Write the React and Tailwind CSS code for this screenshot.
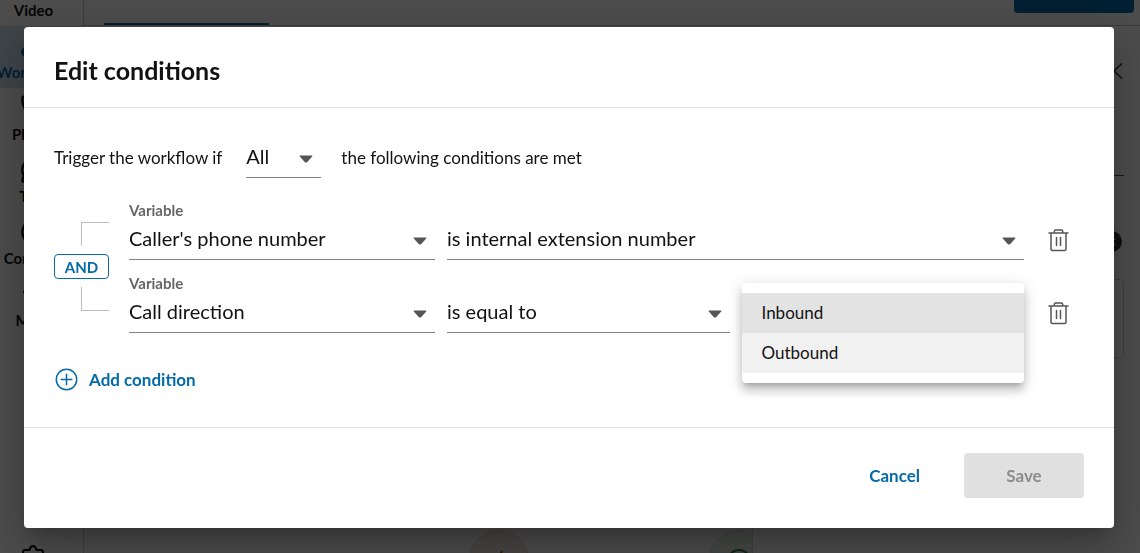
import { useState } from "react";
import { CircleUser, MessageCircle, Phone, X } from "lucide-react";

const navItems = [
  { label: "Video" },
  { label: "Workflows", icon: "flow", active: true },
  { label: "Phone", icon: Phone },
  { label: "Text", icon: MessageCircle },
  { label: "Contacts", icon: CircleUser },
  { label: "More", icon: "more" },
];

function NavIcon({ icon: Icon }) {
  if (!Icon) return <span className="h-7" />;
  if (Icon === "flow") {
    return (
      <svg className="h-7 w-7" viewBox="0 0 28 28" fill="currentColor" aria-hidden="true">
        <circle cx="6" cy="20" r="5" />
        <circle cx="22" cy="6" r="4" />
        <circle cx="22" cy="20" r="4" />
      </svg>
    );
  }
  if (Icon === "more") {
    return (
      <svg className="h-7 w-7" viewBox="0 0 28 28" fill="currentColor" aria-hidden="true">
        <circle cx="5" cy="12" r="2" />
        <circle cx="14" cy="12" r="2" />
        <circle cx="23" cy="12" r="2" />
      </svg>
    );
  }
  return <Icon className="h-7 w-7" strokeWidth={2} aria-hidden="true" />;
}

function Backdrop() {
  return (
    <div className="flex h-screen overflow-hidden bg-white" aria-hidden="true" inert>
      <nav className="-ml-4 flex w-[100px] shrink-0 flex-col justify-between overflow-hidden border-r border-[#cccccc]">
        <ul className="-mt-9">
          {navItems.map((item) => (
            <li key={item.label}>
              <a
                href="#nav"
                className={
                  item.active
                    ? "flex h-[62px] flex-col items-center justify-end bg-[#cfe3f0] pb-1 text-[15px] leading-6 font-bold text-[#066aa8]"
                    : "flex h-[62px] flex-col items-center justify-end pb-1 text-[15px] leading-6 font-bold text-[#121212]"
                }
              >
                <NavIcon icon={item.icon} />
                {item.label}
              </a>
            </li>
          ))}
        </ul>
        <svg className="mx-auto -mb-4 h-6 w-6" viewBox="0 0 24 24" fill="none" stroke="#000000" strokeWidth="2" aria-hidden="true">
          <path d="M1 22V7Q1 5 3 5H7.500Q8.500 1 11 1Q13.500 1 14.500 5H19Q21 5 21 7V22" />
        </svg>
      </nav>
      <div className="flex min-w-0 flex-1 flex-col">
        <header className="flex h-[26px] shrink-0 items-end justify-between border-b border-[#c4c4c4] pr-[6px] pl-5">
          <span className="h-[2px] w-[165px] bg-[#066aa8]" />
          <span className="mb-3 h-6 w-[120px] rounded bg-[#066aa8]" />
        </header>
        <div className="flex min-h-0 flex-1">
          <div className="relative flex-1 overflow-hidden bg-[#fafafa]">
            <span className="absolute -bottom-[37px] left-[385px] flex h-[60px] w-[60px] justify-center rounded-full border border-[#e2cfc5] bg-[#efe9e4]">
              <svg className="mt-[18px] h-6 w-6" viewBox="0 0 24 24" fill="none" stroke="#a03c14" strokeWidth="2" aria-hidden="true">
                <path d="M15 2L13 6V14" />
              </svg>
            </span>
            <span className="absolute -bottom-[37px] left-[625px] flex h-[60px] w-[60px] justify-center rounded-full border border-[#cfdfd2] bg-[#e6ede7]">
              <svg className="mt-[18px] h-6 w-6" viewBox="0 0 24 24" fill="none" stroke="#1f7a33" strokeWidth="2" aria-hidden="true">
                <circle cx="12" cy="12" r="11" />
              </svg>
            </span>
          </div>
          <aside className="flex w-[388px] flex-col border-l border-[#d8d8d8] px-4 pt-[37px]">
            <svg className="h-4 w-3 self-end" viewBox="0 0 12 16" fill="none" stroke="#333333" strokeWidth="1.500" aria-hidden="true">
              <path d="M10 0.500L2 8L10 15.500" />
            </svg>
            <div className="mt-[96px] border-b border-[#555555]" />
            <div className="mt-[55px] mr-[2px] flex h-[21px] w-[21px] items-center justify-center self-end rounded-full bg-[#333333]">
              <X className="h-3 w-3 text-white" strokeWidth={2} />
            </div>
            <div className="mt-[27px] h-[79px] rounded border border-[#d4d4d4]" />
          </aside>
        </div>
      </div>
    </div>
  );
}

function Caret() {
  return (
    <svg className="pointer-events-none absolute right-2 bottom-[15px] h-2 w-[14px]" viewBox="0 0 14 8" fill="#555555" aria-hidden="true">
      <path d="M1.400 0.500H12.600Q14 0.500 13.200 1.600L8.300 7Q7 8.200 5.700 7L0.800 1.600Q0 0.500 1.400 0.500Z" />
    </svg>
  );
}

function Dropdown({ id, label, options }) {
  return (
    <span className="relative block">
      <select
        id={id}
        aria-label={label}
        className="block h-10 w-full cursor-pointer appearance-none truncate border-b border-[#808080] bg-transparent pr-6 pb-1 text-xl text-[#121212]"
      >
        {options.map((option) => (
          <option key={option}>{option}</option>
        ))}
      </select>
      <Caret />
    </span>
  );
}

function VariableField({ id, options }) {
  return (
    <div className="w-[306px] shrink-0">
      <label htmlFor={id} className="block text-[15px] leading-5 font-bold text-[#666666]">
        Variable
      </label>
      <Dropdown id={id} options={options} />
    </div>
  );
}

function DeleteButton({ label }) {
  return (
    <button type="button" aria-label={label} className="-ml-1 flex h-10 w-[52px] shrink-0 cursor-pointer items-center justify-center">
      <svg className="h-6 w-6" viewBox="0 0 24 24" fill="none" stroke="#555555" strokeWidth="1.500" strokeLinecap="round" strokeLinejoin="round" aria-hidden="true">
        <path d="M3 5H22M8.300 5V3.200Q8.300 2 9.500 2H15.500Q16.700 2 16.700 3.200V5M5 5V21Q5 22.500 6.500 22.500H18.500Q20 22.500 20 21V5M10.500 9.500V17.500M14.500 9.500V17.500" />
      </svg>
    </button>
  );
}

function ValueMenu() {
  const [selected, setSelected] = useState("Inbound");
  return (
    <ul
      role="listbox"
      aria-label="Value"
      className="absolute inset-x-0 top-[10px] z-10 rounded bg-white py-[10px] shadow-[0_5px_5px_-3px_rgba(0,0,0,0.2),0_8px_10px_1px_rgba(0,0,0,0.14),0_3px_14px_2px_rgba(0,0,0,0.12)]"
    >
      {["Inbound", "Outbound"].map((option) => (
        <li
          key={option}
          role="option"
          tabIndex={0}
          aria-selected={selected === option}
          onClick={() => setSelected(option)}
          className={
            selected === option
              ? "flex h-10 cursor-pointer items-center bg-[#e3e3e3] px-5 text-[17px] text-[#121212]"
              : "flex h-10 cursor-pointer items-center bg-[#f1f1f1] px-5 text-[17px] text-[#121212]"
          }
        >
          {option}
        </li>
      ))}
    </ul>
  );
}

export default function App() {
  return (
    <div className="font-[Lato,sans-serif] text-[#121212]">
      <Backdrop />
      <div className="fixed inset-0 flex items-center justify-center bg-black/70 pt-[2px] pr-[26px] pl-6">
        <section
          role="dialog"
          aria-modal="true"
          aria-labelledby="dialog-title"
          className="w-full rounded bg-white shadow-[0_11px_15px_-7px_rgba(0,0,0,0.2),0_24px_38px_3px_rgba(0,0,0,0.14),0_9px_46px_8px_rgba(0,0,0,0.12)]"
        >
          <header className="flex h-[81px] items-center border-b border-[#e0e0e0] px-[30px]">
            <h1 id="dialog-title" className="pt-[6px] text-[25px] leading-8 font-bold">
              Edit conditions
            </h1>
          </header>

          <div className="border-b border-[#e0e0e0] px-[30px] pt-[30px] pb-[35px]">
            <div className="flex items-center text-[17px]">
              <span>Trigger the workflow if</span>
              <div className="mr-5 ml-6 w-[75px]">
                <Dropdown id="match" label="Match" options={["All", "Any"]} />
              </div>
              <span>the following conditions are met</span>
            </div>

            <div className="mt-[22px] flex gap-5">
              <div className="flex w-[55px] shrink-0 flex-col items-end justify-center gap-2">
                <span className="h-6 w-7 border-t border-l border-[#bdbdbd]" />
                <button type="button" className="h-[25px] w-full cursor-pointer rounded border border-[#066aa8] text-[15px] leading-5 font-bold text-[#066aa8]">
                  AND
                </button>
                <span className="h-6 w-7 border-b border-l border-[#bdbdbd]" />
              </div>

              <div className="flex min-w-0 flex-1 flex-col gap-[13px]">
                <div className="flex items-end gap-3">
                  <VariableField id="variable-1" options={["Caller's phone number", "Call direction"]} />
                  <div className="min-w-0 flex-1">
                    <Dropdown id="operator-1" label="Operator" options={["is internal extension number", "is equal to"]} />
                  </div>
                  <DeleteButton label="Delete condition 1" />
                </div>
                <div className="flex items-end gap-3">
                  <VariableField id="variable-2" options={["Call direction", "Caller's phone number"]} />
                  <div className="min-w-0 flex-1">
                    <Dropdown id="operator-2" label="Operator" options={["is equal to", "is not equal to"]} />
                  </div>
                  <div className="relative min-w-0 flex-1 self-stretch">
                    <ValueMenu />
                  </div>
                  <DeleteButton label="Delete condition 2" />
                </div>
              </div>
            </div>

            <button type="button" className="mt-[35px] flex h-6 cursor-pointer items-center gap-[11px] text-[17px] font-bold text-[#066aa8]">
              <svg className="h-6 w-6" viewBox="0 0 24 24" fill="none" stroke="currentColor" strokeWidth="1.500" strokeLinecap="round" aria-hidden="true">
                <circle cx="12.500" cy="11.500" r="10.200" />
                <path d="M12.500 6.200V16.800M7.200 11.500H17.800" />
              </svg>
              Add condition
            </button>
          </div>

          <footer className="flex justify-end gap-[14px] px-[30px] pt-[25px] pb-[30px]">
            <button type="button" className="h-[45px] cursor-pointer px-[30px] text-[17px] font-bold text-[#066aa8]">
              Cancel
            </button>
            <button type="button" disabled className="h-[45px] w-[120px] rounded bg-[#e0e0e0] text-[17px] font-bold text-[#8c8c8c]">
              Save
            </button>
          </footer>
        </section>
      </div>
    </div>
  );
}
